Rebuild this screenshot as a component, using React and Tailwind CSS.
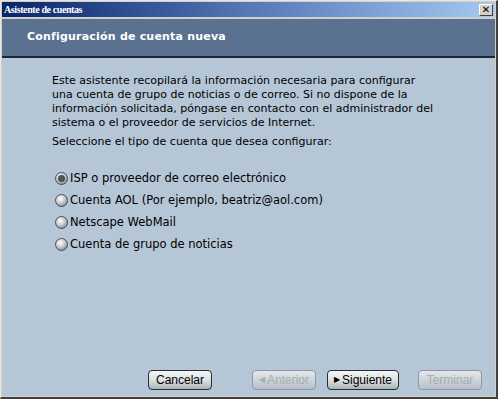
import React from 'react';

const Radio = ({ checked }) => (
  <svg width="13" height="13" viewBox="0 0 13 13" className="shrink-0">
    <defs>
      <radialGradient id={checked ? 'rg1' : 'rg0'} cx="40%" cy="35%" r="70%">
        <stop offset="0%" stopColor="#ffffff" />
        <stop offset="55%" stopColor="#c4c8cc" />
        <stop offset="100%" stopColor="#7c8288" />
      </radialGradient>
    </defs>
    <circle cx="6.5" cy="6.5" r="6" fill={`url(#${checked ? 'rg1' : 'rg0'})`} stroke="#4a5058" strokeWidth="1" />
    {checked && <circle cx="6.5" cy="6.5" r="3.2" fill="#4e5a5e" stroke="#2c3236" strokeWidth="0.6" />}
  </svg>
);

const Button = ({ children, disabled, wide }) => (
  <button
    className={`h-[20px] ${wide ? 'w-[72px]' : 'w-[64px]'} rounded-[4px] border flex items-center justify-center gap-[2px] text-[12px] leading-none ${
      disabled
        ? 'border-[#8c98a4] text-[#a4acb4] bg-gradient-to-b from-[#e4e8ec] to-[#b8c0c6]'
        : 'border-[#2a2e32] text-black bg-gradient-to-b from-[#f4f6f6] via-[#dde2e2] to-[#aab4b4]'
    }`}
    style={{ fontFamily: '"Liberation Sans", Arial, sans-serif' }}
  >
    {children}
  </button>
);

export default function App() {
  const options = [
    'ISP o proveedor de correo electrónico',
    'Cuenta AOL (Por ejemplo, beatriz@aol.com)',
    'Netscape WebMail',
    'Cuenta de grupo de noticias',
  ];

  return (
    <div className="w-[498px] h-[399px] bg-[#d4d0c8] border-r-2 border-b-2 border-r-[#404040] border-b-[#404040] border-t border-l border-t-[#e8e6e0] border-l-[#e8e6e0] flex flex-col p-[1px] overflow-hidden">
      {/* title bar */}
      <div className="h-[15px] flex items-center justify-between pl-[2px] pr-[2px] bg-gradient-to-r from-[#0a246a] via-[#5478b8] to-[#a6caf0]">
        <span
          className="text-white font-bold text-[10px] leading-none tracking-[-0.4px]"
          style={{ fontFamily: '"Liberation Serif", "Times New Roman", serif' }}
        >
          Asistente de cuentas
        </span>
        <div className="w-[14px] h-[12px] bg-[#d4d0c8] border border-t-white border-l-white border-r-[#404040] border-b-[#404040] flex items-center justify-center text-[10px] leading-none font-bold text-black"
          style={{ fontFamily: '"DejaVu Sans", sans-serif' }}>
          ✕
        </div>
      </div>
      <div className="flex-1 mt-[2px] flex flex-col" style={{ fontFamily: '"DejaVu Sans", Verdana, sans-serif' }}>
        {/* header */}
        <div className="h-[39px] bg-[#5b7190] border-b-2 border-b-[#1e2630] flex items-center pl-[25px]">
          <span className="text-white font-bold text-[11px] tracking-[0.2px]">Configuración de cuenta nueva</span>
        </div>
        {/* body */}
        <div className="flex-1 bg-[#b5c6d7] flex flex-col pl-[50px] pt-[16px] pb-[6px] pr-[12px]">
          <p className="w-[386px] text-[11px] leading-[14px] text-black">
            Este asistente recopilará la información necesaria para configurar una cuenta de grupo de noticias o de correo. Si no dispone de la información solicitada, póngase en contacto con el administrador del sistema o el proveedor de servicios de Internet.
          </p>
          <p className="text-[11px] leading-[14px] text-black mt-[5px]">
            Seleccione el tipo de cuenta que desea configurar:
          </p>
          <div className="flex flex-col gap-[9px] mt-[23px] pl-[3px]">
            {options.map((o, i) => (
              <div key={i} className="flex items-center gap-[2px] h-[13px] text-[11.5px] text-black">
                <Radio checked={i === 0} />
                <span>{o}</span>
              </div>
            ))}
          </div>
          <div className="mt-auto flex items-center pl-[96px]">
            <Button>Cancelar</Button>
            <div className="ml-[40px]">
              <Button disabled>
                <span className="text-[8px]">◀</span>Anterior
              </Button>
            </div>
            <div className="ml-[11px]">
              <Button wide>
                <span className="text-[8px]">▶</span>Siguiente
              </Button>
            </div>
            <div className="ml-[19px]">
              <Button disabled>Terminar</Button>
            </div>
          </div>
        </div>
      </div>
    </div>
  );
}
